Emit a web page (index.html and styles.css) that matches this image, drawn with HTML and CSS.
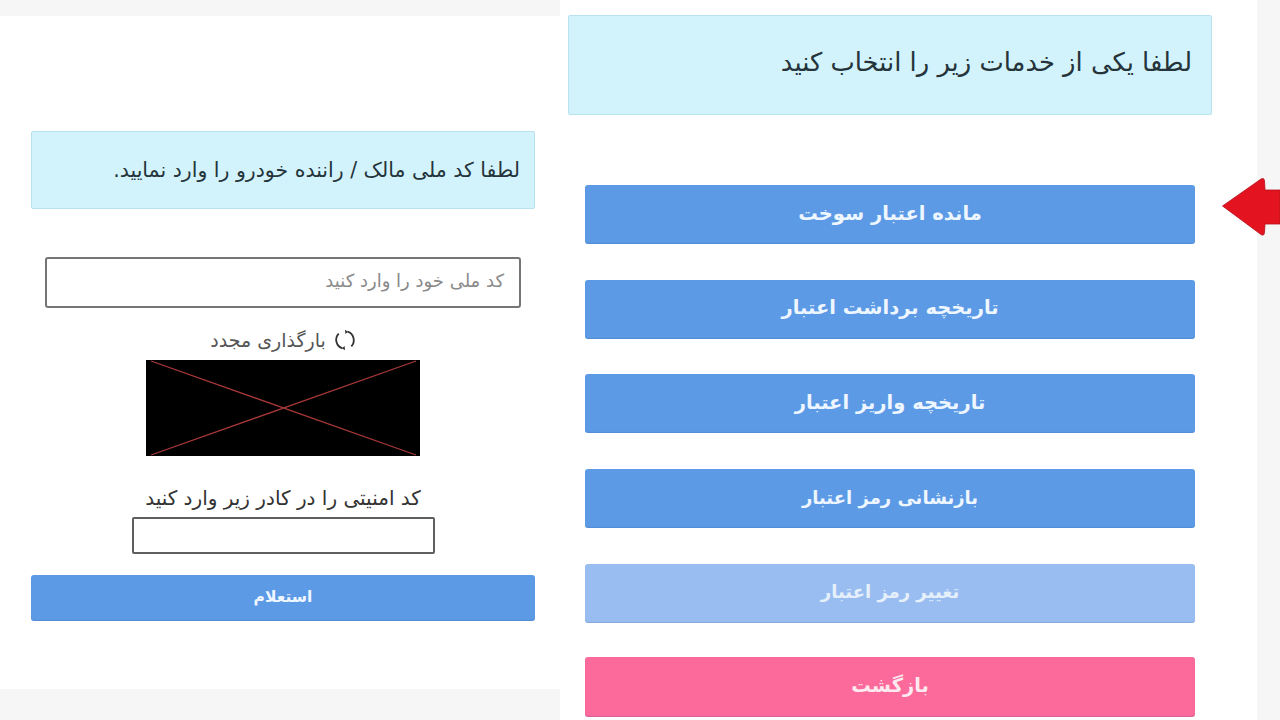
FILE: index.html
```html
<!DOCTYPE html>
<html lang="fa" dir="rtl">
<head>
<meta charset="utf-8">
<title>اعتبار سوخت</title>
<link rel="stylesheet" href="styles.css">
</head>
<body>
<div class="page">
  <main class="pane-left">
    <div class="sheet-left">
      <div class="alert alert-small">لطفا کد ملی مالک / راننده خودرو را وارد نمایید.</div>
      <div class="field-national"><span class="placeholder">کد ملی خود را وارد کنید</span></div>
      <div class="reload">
        <svg class="reload-icon" viewBox="0 0 22 22" aria-hidden="true">
          <path d="M13.500 2.600a9 9 0 0 1 3.800 14.800M8.500 19.400A9 9 0 0 1 4.700 4.600"/>
          <path class="tip" d="M11 0.800 14 2.800 11.400 5zM11 21.200 8 19.200 10.600 17z"/>
        </svg>
        <span>بارگذاری مجدد</span>
      </div>
      <svg class="captcha" viewBox="0 0 274 96" preserveAspectRatio="none" aria-hidden="true">
        <rect width="274" height="96"/>
        <path d="M5 1 270 95M270 1 5 95"/>
      </svg>
      <div class="captcha-label">کد امنیتی را در کادر زیر وارد کنید</div>
      <div class="field-captcha"></div>
      <button class="btn btn-inquiry">استعلام</button>
    </div>
  </main>
  <section class="pane-right">
    <div class="alert alert-large">لطفا یکی از خدمات زیر را انتخاب کنید</div>
    <nav class="menu">
      <button class="btn btn-menu">مانده اعتبار سوخت</button>
      <button class="btn btn-menu">تاریخچه برداشت اعتبار</button>
      <button class="btn btn-menu">تاریخچه واریز اعتبار</button>
      <button class="btn btn-menu btn-narrow">بازنشانی رمز اعتبار</button>
      <button class="btn btn-menu btn-narrow btn-disabled">تغییر رمز اعتبار</button>
      <button class="btn btn-menu btn-back">بازگشت</button>
    </nav>
  </section>
</div>
<svg class="arrow" viewBox="0 0 58 58" aria-hidden="true">
  <path d="M0.500 28 L39 1 Q42 -0.500 42.500 2.500 L43 12 L58 12 L58 46 L43 46 L42.500 54.500 Q42 58.500 39 56.500 Z"/>
</svg>
</body>
</html>
```

FILE: styles.css
```css
* { box-sizing: border-box; }
html, body { margin: 0; height: 100%; }
body {
  width: 1280px;
  height: 720px;
  overflow: hidden;
  position: relative;
  background: #f6f6f6;
  font-family: "DejaVu Sans", sans-serif;
  color: #2b2b2b;
}
.page {
  display: flex;
  height: 720px;
  direction: ltr;
}
.pane-left {
  width: 560px;
  padding-top: 16px;
  flex: none;
}
.sheet-left {
  direction: rtl;
  height: 673px;
  background: #fff;
  padding: 115px 25px 0 31px;
  display: flex;
  flex-direction: column;
  align-items: center;
}
.pane-right {
  direction: rtl;
  width: 697px;
  flex: none;
  background: #fff;
  padding: 15px 45px 0 8px;
  display: flex;
  flex-direction: column;
}
.alert {
  background: #d3f3fc;
  border: 1px solid #b9e2ef;
  border-radius: 2px;
  color: #24343a;
  display: flex;
  align-items: center;
}
.alert-small {
  width: 504px;
  height: 78px;
  padding: 0 14px 0 0;
  font-size: 20.500px;
}
.alert-large {
  width: 644px;
  height: 100px;
  padding: 0 19px 6px 0;
  font-size: 25.800px;
}
.field-national {
  width: 476px;
  height: 51px;
  margin-top: 48px;
  background: #fff;
  border: 2px solid #757575;
  border-radius: 3px;
  display: flex;
  align-items: center;
  padding: 0 15px 4px 0;
}
.placeholder { font-size: 18px; color: #8a8a8a; }
.reload {
  height: 20px;
  margin-top: 22px;
  display: flex;
  align-items: center;
  gap: 8px;
  font-size: 19px;
  color: #555;
}
.reload-icon { width: 22px; height: 22px; flex: none; }
.reload-icon path { fill: none; stroke: #333; stroke-width: 1.800; }
.reload-icon .tip { fill: #333; stroke: none; }
.captcha { display: block; width: 274px; height: 96px; margin-top: 10px; flex: none; }
.captcha rect { fill: #000; }
.captcha path { fill: none; stroke: #a83838; stroke-width: 1.300; }
.captcha-label {
  margin-top: 29px;
  height: 32px;
  line-height: 26px;
  font-size: 20px;
  color: #333;
}
.field-captcha {
  width: 303px;
  height: 37px;
  background: #fff;
  border: 2px solid #5f5f5f;
  border-radius: 2px;
}
.btn {
  display: block;
  border: 0;
  border-radius: 3px;
  background: #5c9ae6;
  color: #eef6ff;
  font-family: "DejaVu Sans", sans-serif;
  font-weight: 700;
  text-align: center;
  padding: 0;
  box-shadow: inset 0 -1px 1px rgba(40, 80, 130, 0.18);
}
.btn-inquiry {
  width: 504px;
  height: 46px;
  margin-top: 21px;
  padding-bottom: 3px;
  font-size: 15.500px;
}
.menu {
  display: flex;
  flex-direction: column;
  margin-top: 70px;
  padding-right: 17px;
  gap: 35.700px;
}
.btn-menu {
  width: 610px;
  height: 59px;
  padding-bottom: 3px;
  font-size: 19.500px;
}
.btn-narrow { font-size: 18px; }
.btn-disabled { background: #99bdf0; color: #e6f0fb; }
.btn-back { background: #fb6a9b; color: #fde9f0; margin-top: -1.500px; height: 60px; }
.arrow {
  position: absolute;
  left: 1222px;
  top: 178px;
  width: 58px;
  height: 58px;
}
.arrow path { fill: #e3141f; stroke: #b2101c; stroke-width: 0.800; }
```
